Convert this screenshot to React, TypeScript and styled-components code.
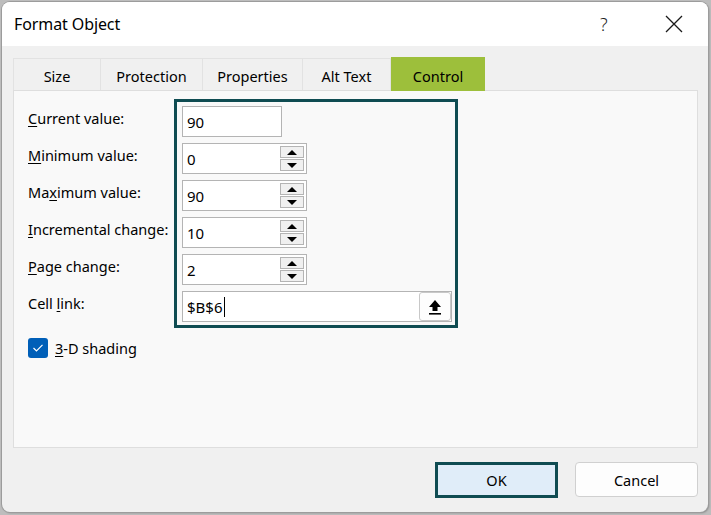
import styled, {createGlobalStyle} from 'styled-components';

const GlobalStyle = createGlobalStyle`
  html, body {
    margin: 0;
    padding: 0;
    background: #bdbdbd;
    font-family: "Noto Sans", "Open Sans", sans-serif;
  }
`;

const tabs = ['Size', 'Protection', 'Properties', 'Alt Text', 'Control'];
const tabWidths = [88, 102, 100, 88, 94];

interface Field {
    label: JSX.Element;
    value: string;
    spin?: boolean;
    wide?: boolean;
}

const fields: Field[] = [
    {label: <><u>C</u>urrent value:</>, value: '90'},
    {label: <><u>M</u>inimum value:</>, value: '0', spin: true},
    {label: <>Ma<u>x</u>imum value:</>, value: '90', spin: true},
    {label: <><u>I</u>ncremental change:</>, value: '10', spin: true},
    {label: <><u>P</u>age change:</>, value: '2', spin: true},
    {label: <>Cell <u>l</u>ink:</>, value: '$B$6', wide: true},
];

export default function App(): JSX.Element {
    return (
        <>
            <GlobalStyle/>
            <Window>
                <TitleBar>
                    <Title>Format Object</Title>
                    <Help>?</Help>
                    <CloseBtn>
                        <svg width="20" height="20" viewBox="0 0 20 20">
                            <path d="M2 2 L18 18 M18 2 L2 18" stroke="#1a1a1a" strokeWidth="1.3" fill="none"/>
                        </svg>
                    </CloseBtn>
                </TitleBar>
                <Body>
                    <TabRow>
                        {tabs.map((t, i) => (
                            <Tab key={t} $active={t === 'Control'} style={{width: tabWidths[i]}}>{t}</Tab>
                        ))}
                    </TabRow>
                    <Panel>
                        <FormArea>
                            <LabelColumn>
                                {fields.map((f, i) => <Label key={i}><span>{f.label}</span></Label>)}
                            </LabelColumn>
                            <FieldBox>
                                {fields.map((f, i) => (
                                    <InputBox key={i} $wide={f.wide} $spin={f.spin}>
                                        <InputText>{f.value}{f.wide && <Caret/>}</InputText>
                                        {f.spin && (
                                            <Spinner>
                                                <SpinBtn><UpTri/></SpinBtn>
                                                <SpinBtn><DownTri/></SpinBtn>
                                            </Spinner>
                                        )}
                                        {f.wide && (
                                            <RefBtn>
                                                <svg width="14" height="16" viewBox="0 0 14 16">
                                                    <path d="M7 1 L13 8 L9.5 8 L9.5 12 L4.5 12 L4.5 8 L1 8 Z" fill="#000"/>
                                                    <rect x="1" y="14" width="12" height="1.6" fill="#000"/>
                                                </svg>
                                            </RefBtn>
                                        )}
                                    </InputBox>
                                ))}
                            </FieldBox>
                        </FormArea>
                        <CheckRow>
                            <CheckBox>
                                <svg width="12" height="10" viewBox="0 0 12 10">
                                    <path d="M1.5 5 L4.5 8 L10.5 1.8" stroke="#fff" strokeWidth="1.2" fill="none"/>
                                </svg>
                            </CheckBox>
                            <CheckLabel><u>3</u>-D shading</CheckLabel>
                        </CheckRow>
                    </Panel>
                    <Footer>
                        <Button $primary>OK</Button>
                        <Button>Cancel</Button>
                    </Footer>
                </Body>
            </Window>
        </>
    );
}

const Window = styled.div`
  margin: 2px 3px 3px 2px;
  width: 706px;
  height: 510px;
  border-radius: 8px;
  overflow: hidden;
  background: #f0f0f0;
  box-shadow: 0 0 0 1px #9c9c9c, 1px 1px 2px rgba(0, 0, 0, 0.3);
  display: flex;
  flex-direction: column;
`;

const TitleBar = styled.div`
  height: 44px;
  background: #fff;
  display: flex;
  align-items: center;
  padding: 0 0 0 12px;
`;

const Title = styled.div`
  flex: 1;
  font-size: 16px;
  color: #000;
  letter-spacing: -0.1px;
`;

const Help = styled.div`
  font-size: 18px;
  font-weight: 300;
  color: #222;
  width: 20px;
  margin-right: 44px;
`;

const CloseBtn = styled.div`
  width: 20px;
  height: 20px;
  margin-right: 24px;
`;

const Body = styled.div`
  flex: 1;
  display: flex;
  flex-direction: column;
  padding: 12px 10px 0 11px;
`;

const TabRow = styled.div`
  display: flex;
  height: 32px;
  align-items: flex-end;
`;

const Tab = styled.div<{ $active?: boolean }>`
  box-sizing: border-box;
  height: ${p => (p.$active ? '34px' : '32px')};
  margin-bottom: ${p => (p.$active ? '-1px' : '0')};
  position: ${p => (p.$active ? 'relative' : 'static')};
  z-index: 1;
  display: flex;
  align-items: center;
  justify-content: center;
  padding-top: 3px;
  font-size: 14.5px;
  color: #000;
  background: ${p => (p.$active ? '#9dbf3b' : '#f0f0f0')};
  border: 1px solid ${p => (p.$active ? '#9dbf3b' : '#e2e2e2')};
  border-bottom: none;
  border-left-width: ${p => (p.$active ? '1px' : '0')};
  &:first-child {
    border-left-width: 1px;
  }
`;

const Panel = styled.div`
  box-sizing: border-box;
  height: 358px;
  background: #f9f9f9;
  border: 1px solid #dedede;
  padding: 8px 0 0 14px;
`;

const FormArea = styled.div`
  display: flex;
`;

const LabelColumn = styled.div`
  width: 146px;
  display: flex;
  flex-direction: column;
  gap: 6px;
  padding-top: 7px;
`;

const Label = styled.div`
  height: 31px;
  display: flex;
  align-items: center;
  font-size: 14.5px;
  color: #000;
  margin-top: -4px;
  margin-bottom: 4px;
  & u {
    text-underline-offset: 2px;
  }
`;

const FieldBox = styled.div`
  box-sizing: border-box;
  width: 284px;
  border: 3px solid #0f4c52;
  padding: 4px 3px 3px 5px;
  display: flex;
  flex-direction: column;
  gap: 6px;
`;

const InputBox = styled.div<{ $wide?: boolean; $spin?: boolean }>`
  box-sizing: border-box;
  width: ${p => (p.$wide ? '270px' : p.$spin ? '125px' : '100px')};
  height: 31px;
  border: 1px solid #b4b4b4;
  background: #fff;
  display: flex;
  align-items: center;
  justify-content: space-between;
  padding-left: 4px;
`;

const InputText = styled.div`
  font-size: 15px;
  color: #000;
  display: flex;
  align-items: center;
`;

const Caret = styled.span`
  display: inline-block;
  width: 1px;
  height: 20px;
  background: #000;
  margin-left: 1px;
`;

const Spinner = styled.div`
  display: flex;
  flex-direction: column;
  gap: 1px;
  margin-right: 2px;
`;

const SpinBtn = styled.div`
  box-sizing: border-box;
  width: 24px;
  height: 12px;
  border: 1px solid #b4b4b4;
  background: #f0f0f0;
  display: flex;
  align-items: center;
  justify-content: center;
`;

const UpTri = styled.span`
  width: 0;
  height: 0;
  border-left: 5px solid transparent;
  border-right: 5px solid transparent;
  border-bottom: 5px solid #000;
`;

const DownTri = styled.span`
  width: 0;
  height: 0;
  border-left: 5px solid transparent;
  border-right: 5px solid transparent;
  border-top: 5px solid #000;
`;

const RefBtn = styled.div`
  box-sizing: border-box;
  width: 32px;
  height: 29px;
  border: 1px solid #c8c8c8;
  border-radius: 3px;
  background: #fdfdfd;
  display: flex;
  align-items: center;
  justify-content: center;
`;

const CheckRow = styled.div`
  display: flex;
  align-items: center;
  gap: 7px;
  margin-top: 10px;
`;

const CheckBox = styled.div`
  width: 20px;
  height: 20px;
  border-radius: 3px;
  background: #005fb8;
  display: flex;
  align-items: center;
  justify-content: center;
`;

const CheckLabel = styled.div`
  font-size: 14.5px;
  color: #000;
  & u {
    text-underline-offset: 2px;
  }
`;

const Footer = styled.div`
  display: flex;
  justify-content: flex-end;
  gap: 17px;
  padding: 14px 0 0;
`;

const Button = styled.div<{ $primary?: boolean }>`
  box-sizing: border-box;
  width: 123px;
  height: ${p => (p.$primary ? '36px' : '35px')};
  display: flex;
  align-items: center;
  justify-content: center;
  font-size: 14.5px;
  color: #000;
  border-radius: ${p => (p.$primary ? '0' : '4px')};
  background: ${p => (p.$primary ? '#e0edf9' : '#fdfdfd')};
  border: ${p => (p.$primary ? '3px solid #0f4c52' : '1px solid #d0d0d0')};
`;
